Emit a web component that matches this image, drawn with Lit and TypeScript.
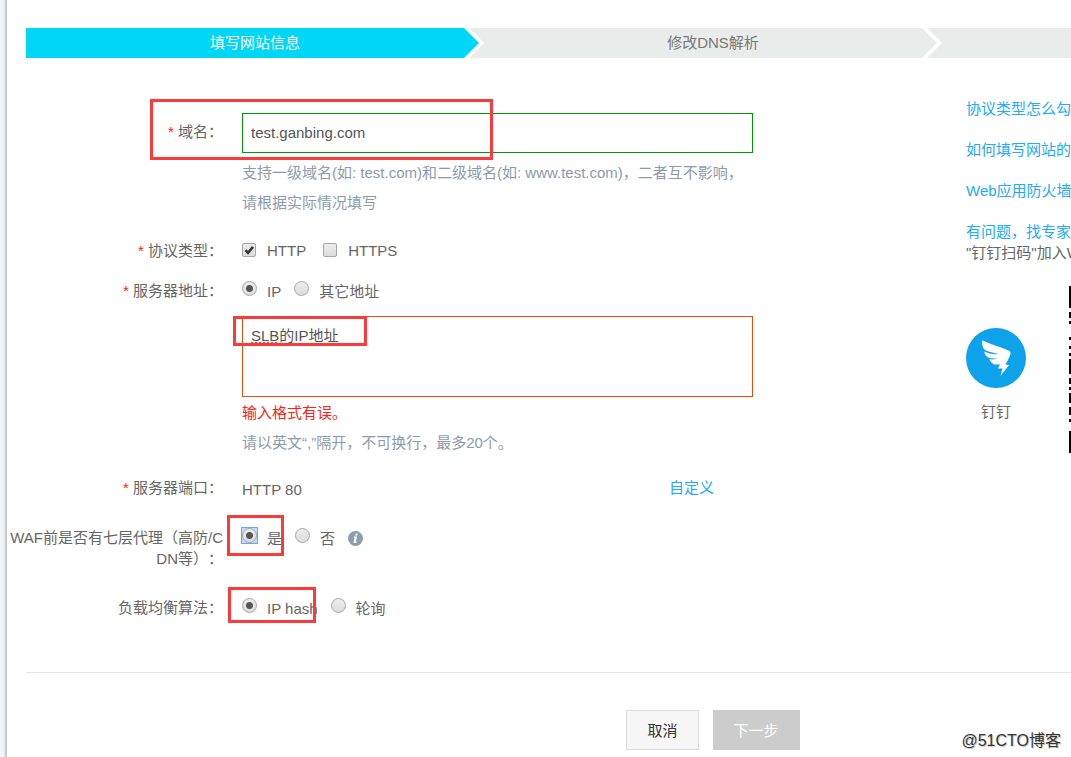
import { LitElement, html, css, svg } from "lit";
import { customElement } from "lit/decorators.js";

// Dark runs down the first column of the QR code: [top, height]
const QR_RUNS: [number, number][] = [
  [0, 22], [26, 6], [35, 3], [51, 3], [60, 3], [67, 3], [73, 15],
  [92, 6], [101, 3], [107, 10], [121, 8], [133, 3], [145, 22],
];

@customElement("app-root")
export class AppRoot extends LitElement {
  static styles = css`
    :host {
      display: block;
      min-height: 100vh;
      overflow: hidden;
      position: relative;
      background: #fff;
      color: #666;
      font: 15px/21px "Liberation Sans", "Noto Sans CJK SC", sans-serif;
      text-spacing-trim: space-all;
    }
    *, *::before, *::after { box-sizing: border-box; }
    a { color: #22aaff; text-decoration: none; }
    .shell {
      display: grid;
      grid-template-columns: 7px minmax(1393px, 1fr);
      min-height: 100vh;
    }
    .edge { background: linear-gradient(90deg, #f2f3f5 0, #f2f3f5 3px, #e4e5e7 5px, #bbb 6px, #cfcfcf 7px); }
    .page { padding-top: 28px; }
    .steps {
      display: flex;
      height: 30px;
      margin: 0 0 0 19px;
      padding: 0;
      list-style: none;
      background: #eaeceb;
    }
    .step {
      flex: 1;
      display: flex;
      align-items: center;
      justify-content: center;
      position: relative;
      padding-bottom: 2px;
      color: #777;
    }
    .step.active {
      color: #fff;
      background: #00d7f7;
    }
    .arrow { position: absolute; right: 0; top: 0; }
    .body { display: flex; align-items: flex-start; padding-top: 40px; }
    .form { flex: 1; padding-top: 15px; }
    .row {
      display: grid;
      grid-template-columns: 216px 511px;
      column-gap: 19px;
      position: relative;
      margin-top: 10px;
    }
    .row.first { margin-top: 0; }
    .row.mid { margin-top: 15px; }
    .row.far { margin-top: 18px; }
    .row.last { margin-top: 24px; }
    .label { text-align: right; line-height: 30px; }
    .label.tall { line-height: 38px; }
    .label.wrap { line-height: 21px; padding-top: 4px; word-break: break-all; }
    .req { color: #f21; }
    .text {
      display: block;
      width: 100%;
      margin: 0;
      padding: 8px;
      border: 1px solid #090;
      border-radius: 0;
      outline: 0;
      resize: none;
      background: #fff;
      color: #555;
      font: inherit;
    }
    .text.single { height: 40px; margin-bottom: 5px; padding: 7px 8px 9px; }
    .text.area { height: 81px; border-color: #e84c0e; }
    .area-box { position: relative; margin-top: 10px; }
    .spell {
      position: absolute;
      left: 9px;
      top: 26px;
      width: 27px;
      height: 1px;
      background: repeating-linear-gradient(90deg, #f33 0, #f33 2px, transparent 2px, transparent 4px);
    }
    .hint { margin: 0; line-height: 30px; color: #8c9bab; }
    .error { margin: 0; line-height: 30px; padding-top: 1px; color: #f21; }
    .options { display: flex; align-items: center; gap: 13px; height: 30px; }
    .options.checks { gap: 17px; padding-bottom: 2px; }
    .option { display: flex; align-items: center; gap: 10px; }
    .checks .option { gap: 11px; }
    .radio, .check {
      display: block;
      appearance: none;
      margin: 0;
      flex: none;
      border: 1px solid #a6a6a6;
      background: linear-gradient(#ededed, #dcdcdc);
    }
    .radio { width: 15px; height: 15px; border-radius: 50%; outline: 0; }
    .radio:checked { background: radial-gradient(circle, #555 0, #555 3px, transparent 4px), linear-gradient(#ededed, #dcdcdc); }
    .ring { margin-bottom: 5px; }
    .ring.focused { background: #c4dafc; outline: 1px solid #6ea3f8; }
    .check { width: 14px; height: 14px; border-radius: 2px; }
    .checkwrap { display: grid; }
    .checkwrap > * { grid-area: 1 / 1; }
    .tick { pointer-events: none; z-index: 1; }
    .port { display: flex; justify-content: space-between; line-height: 30px; }
    .port span { padding-top: 2px; }
    .port a { margin-right: 39px; }
    .mark { position: absolute; border: 3px solid #fc3a3a; pointer-events: none; }
    .m1 { left: 143px; top: -14px; width: 343px; height: 61px; }
    .m2 { left: -9px; top: 0; width: 134px; height: 30px; }
    .m3 { left: 220px; top: -8px; width: 57px; height: 41px; }
    .m4 { left: 221px; top: -6px; width: 88px; height: 36px; }
    .aside { width: 434px; white-space: nowrap; }
    .aside p { margin: 0; }
    .links { display: flex; flex-direction: column; gap: 20px; margin: 0; padding: 0; list-style: none; }
    .contact { display: flex; gap: 43px; padding-top: 23px; }
    .ding { padding-top: 42px; display: flex; flex-direction: column; gap: 13px; text-align: center; }
    .ding svg, .qr { display: block; }
    .footer {
      display: flex;
      justify-content: center;
      gap: 14px;
      margin: 49px 0 0 19px;
      padding-top: 37px;
      border-top: 1px solid #e5e5e5;
    }
    .btn {
      height: 40px;
      padding: 0 20px;
      border: 1px solid #ddd;
      border-radius: 0;
      background: #f7f7f7;
      color: #333;
      font: inherit;
    }
    .btn:disabled { background: #ccc; border-color: #ccc; color: #fff; }
    .stamp {
      position: absolute;
      right: 10px;
      bottom: 6px;
      color: #333;
      font-size: 16px;
      text-shadow: 1px 1px 0 #ccc;
    }
  `;

  private arrow(color: string) {
    return html`<svg class="arrow" width="21" height="30" viewBox="0 0 21 30" aria-hidden="true">
      <path d="M0 0H21V30H0Z" fill="#eaeceb" /><path d="M0 0H6L21 15L6 30H0Z" fill="#fff" /><path d="M0 0H1L16 15L1 30H0Z" fill=${color} />
    </svg>`;
  }

  private radio(name: string, text: string, checked = false, focused = false) {
    return html`<label class="option"
      ><span class="ring ${focused ? "focused" : ""}"><input class="radio" type="radio" name=${name} ?checked=${checked} /></span
      ><span>${text}</span></label>`;
  }

  private check(text: string, checked = false) {
    return html`<label class="option"
      ><span class="checkwrap"
        ><input class="check" type="checkbox" ?checked=${checked} />${checked
          ? html`<svg class="tick" width="14" height="14" viewBox="0 0 14 14"><path d="M3.5 7.2L6 9.8L11 3.8" fill="none" stroke="#333" stroke-width="2.6" /></svg>`
          : ""}</span
      ><span>${text}</span></label>`;
  }

  render() {
    return html`
      <div class="shell">
        <div class="edge"></div>
        <main class="page">
          <ol class="steps">
            <li class="step active">填写网站信息${this.arrow("#00d7f7")}</li>
            <li class="step">修改DNS解析${this.arrow("#eaeceb")}</li>
            <li class="step"></li>
          </ol>
          <div class="body">
            <form class="form">
              <div class="row first">
                <label class="label tall" for="domain"><span class="req">*</span> 域名：</label>
                <div>
                  <input id="domain" class="text single" type="text" value="test.ganbing.com" />
                  <p class="hint">支持一级域名(如: test.com)和二级域名(如: www.test.com)，二者互不影响，<br />请根据实际情况填写</p>
                </div>
                <div class="mark m1"></div>
              </div>
              <div class="row far">
                <span class="label"><span class="req">*</span> 协议类型：</span>
                <div class="options checks">${this.check("HTTP", true)}${this.check("HTTPS")}</div>
              </div>
              <div class="row">
                <label class="label" for="servers"><span class="req">*</span> 服务器地址：</label>
                <div>
                  <div class="options">${this.radio("addr", "IP", true)}${this.radio("addr", "其它地址")}</div>
                  <div class="area-box">
                    <textarea id="servers" class="text area" spellcheck="false" .value=${"SLB的IP地址"}></textarea>
                    <div class="spell"></div>
                    <div class="mark m2"></div>
                  </div>
                  <p class="error">输入格式有误。</p>
                  <p class="hint">请以英文“,”隔开，不可换行，最多20个。</p>
                </div>
              </div>
              <div class="row mid">
                <span class="label"><span class="req">*</span> 服务器端口：</span>
                <div class="port"><span>HTTP 80</span><a href="#">自定义</a></div>
              </div>
              <div class="row far">
                <span class="label wrap">WAF前是否有七层代理（高防/CDN等）：</span>
                <div class="options">
                  ${this.radio("proxy", "是", true, true)}${this.radio("proxy", "否")}
                  <svg width="15" height="15" viewBox="0 0 15 15" aria-hidden="true">
                    <circle cx="7.5" cy="7.5" r="7.5" fill="#8c9db0" />
                    <path d="M7.700 2.600h2l-.5 1.900h-2zM6 5.400h3L7.900 10.600h.9l-.3 1.300H5.400L6.500 6.600H5.700z" fill="#fff" />
                  </svg>
                </div>
                <div class="mark m3"></div>
              </div>
              <div class="row last">
                <span class="label">负载均衡算法：</span>
                <div class="options">${this.radio("algo", "IP hash", true)}${this.radio("algo", "轮询")}</div>
                <div class="mark m4"></div>
              </div>
            </form>
            <aside class="aside">
              <ul class="links">
                <li><a href="#">协议类型怎么勾</a></li>
                <li><a href="#">如何填写网站的</a></li>
                <li><a href="#">Web应用防火墙</a></li>
                <li><a href="#">有问题，找专家</a><p>"钉钉扫码"加入W</p></li>
              </ul>
              <div class="contact">
                <div class="ding">
                  <svg width="60" height="60" viewBox="0 0 60 60" aria-hidden="true">
                    <circle cx="30" cy="30" r="30" fill="#0ea2ea" />
                    <path fill="#fff" d="M16.300 12.300C25 16.500 35 19 42.500 22.600C44.500 23.600 44.800 24.600 44.300 26.500C43.300 30 41 33.500 39.300 36.600L43 37.100L34.500 48L36.500 40.500H32L34 36C31.500 36.800 29 36.800 27.300 36C25.500 35 24 33 23.300 31.300C26 31.700 29 31.300 31.700 30.500C28 30.600 23.500 30.500 21.300 29C19.500 27.600 18.400 25.500 18.300 23.600C22 25.700 28 26.500 33 26C28 25 22.500 23.800 18.500 21.700C16.400 19.500 15.700 15.500 16.300 12.300Z" />
                  </svg>
                  <span>钉钉</span>
                </div>
                <svg class="qr" width="168" height="168" viewBox="0 0 168 168" aria-hidden="true">
                  ${QR_RUNS.map(([y, h]) => svg`<rect x="0" y=${y} width="3" height=${h} fill="#000" />`)}
                </svg>
              </div>
            </aside>
          </div>
          <div class="footer">
            <button class="btn" type="button">取消</button>
            <button class="btn" type="button" disabled>下一步</button>
          </div>
        </main>
      </div>
      <div class="stamp">@51CTO博客</div>
    `;
  }
}
